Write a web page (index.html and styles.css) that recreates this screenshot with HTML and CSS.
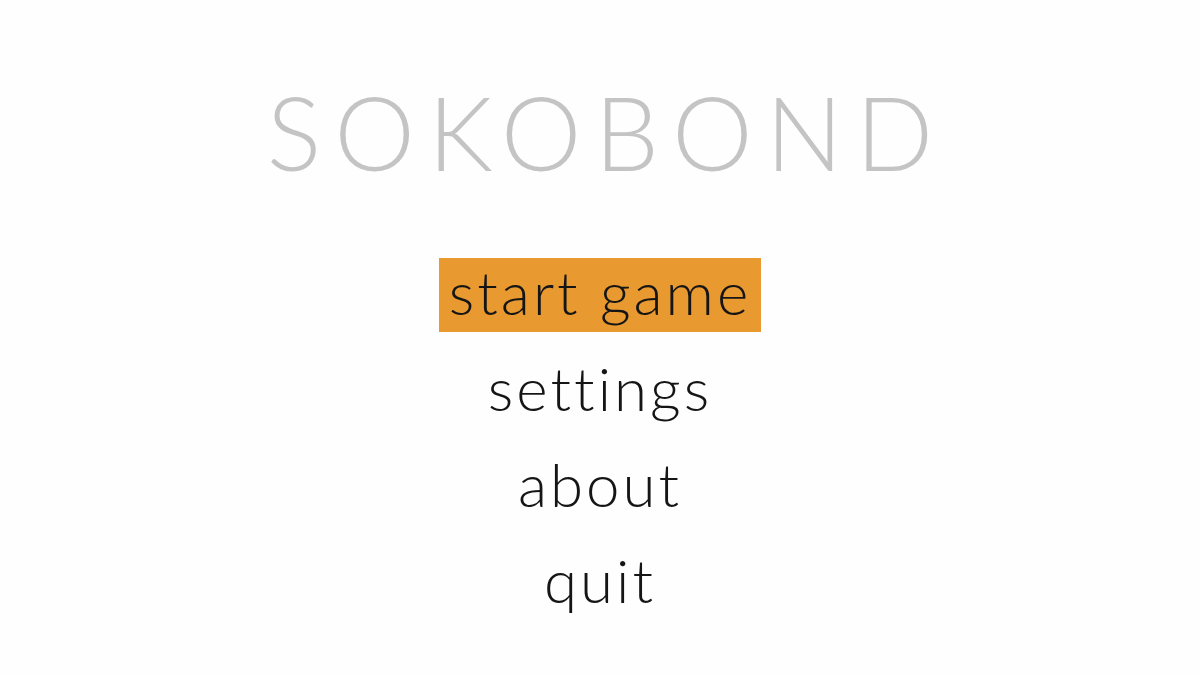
FILE: index.html
```html
<!DOCTYPE html>
<html>
<head>
<meta charset="utf-8">
<link rel="stylesheet" href="styles.css">
</head>
<body>
<main class="screen">
  <h1 class="title">SOKOBOND</h1>
  <nav class="menu">
    <div class="item selected">start game</div>
    <div class="item">settings</div>
    <div class="item">about</div>
    <div class="item">quit</div>
  </nav>
</main>
</body>
</html>
```
FILE: styles.css
```css
html, body {
  margin: 0;
  padding: 0;
  background: #fefefe;
}
.screen {
  width: 1200px;
  height: 675px;
  display: flex;
  flex-direction: column;
  align-items: center;
  font-family: Lato, "Noto Sans", sans-serif;
  overflow: hidden;
}
.title {
  margin: 0;
  padding-top: 72px;
  font-size: 102px;
  line-height: 120px;
  font-weight: 300;
  color: #c4c4c4;
  letter-spacing: 13px;
  margin-right: -13px;
}
.menu {
  margin-top: 66px;
  display: flex;
  flex-direction: column;
  align-items: center;
  gap: 22px;
}
.item {
  font-size: 60px;
  line-height: 68px;
  font-weight: 300;
  color: #151515;
  letter-spacing: 3px;
  padding: 0 10px 6px;
}
.selected {
  background: #e8992f;
}
```
